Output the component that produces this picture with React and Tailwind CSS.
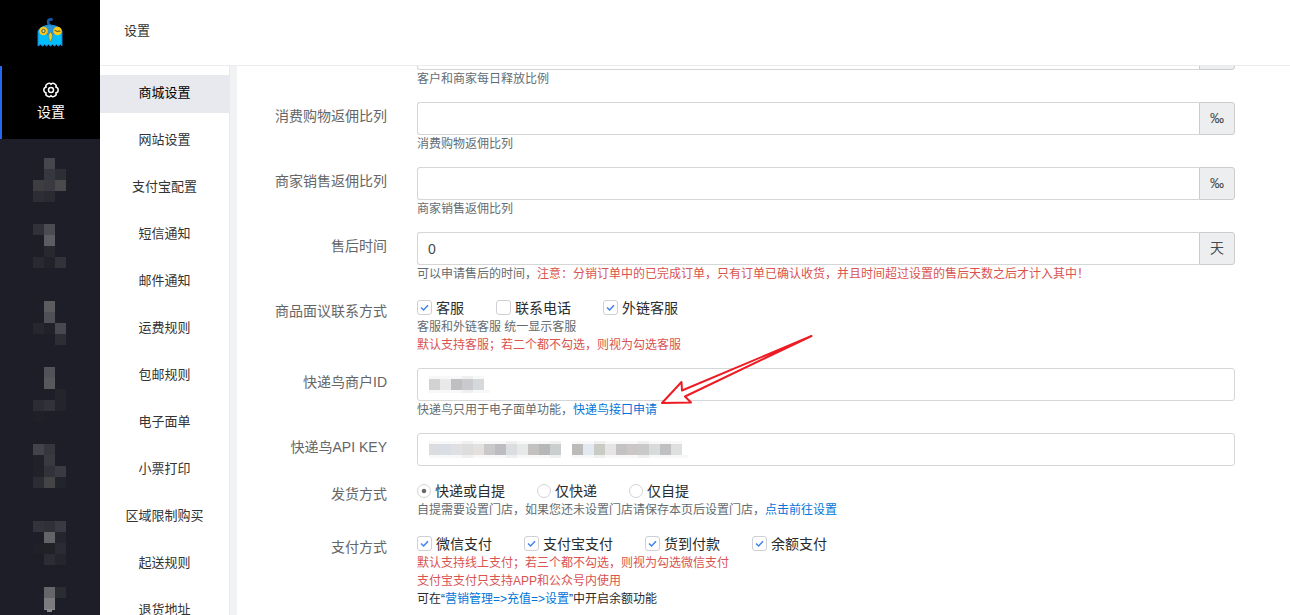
const MENU = [
  '商城设置', '网站设置', '支付宝配置', '短信通知', '邮件通知', '运费规则',
  '包邮规则', '电子面单', '小票打印', '区域限制购买', '起送规则', '退货地址',
]

// One entry per 11px row, three cells wide; null leaves the cell empty
const RAIL_MOSAIC = [
  [null, '#46464e', null],
  [null, '#373740', '#2e2e37'],
  ['#3e3e41', '#3a3a40', '#4a4a4d'],
  ['#2d2d36', '#2a2a32', null],
  [], [],
  ['#31313a', '#4b4b54', null],
  [null, '#5c5c64', null],
  [null, '#282830', null],
  ['#292932', '#22222b', '#32323b'],
  [], [], [],
  [null, '#5c5c60', null],
  [null, '#505058', null],
  ['#272730', '#21212a', '#484851'],
  [null, null, '#2d2d36'],
  [], [],
  [null, '#52525a', null],
  [null, '#58585c', null],
  [null, null, '#24242d'],
  ['#2c2c35', '#32323b', '#24242d'],
  ['#202029', null, null],
  [], [],
  ['#43434c', '#36363f', null],
  ['#21212a', '#393942', null],
  ['#21212a', '#32323b', '#3a3a43'],
  ['#2c2c35', '#444447', '#23232c'],
  [], [], [],
  ['#33333c', '#303039', '#3a3a43'],
  [null, '#646468', '#25252e'],
  ['#202028', '#212128', '#2b2b34'],
  [null, '#2c2c35', '#25252e'],
  [], [],
  [null, '#66666a', '#2b2b32'],
  [null, '#7b7b80', null],
]

const ID_MOSAIC = ['#d2d2d2', '#e8eaea', '#bfbfc1', '#cac9ce', '#d5d9dc']
const KEY_MOSAIC = [
  '#dadce0', '#d8dee3', '#e0e0e2', '#dddddd', '#e4e0de', '#c9c8ca', '#bdbdc1', '#dadee1',
  '#e6e9e8', '#c3c1bf', '#b6b8b7', '#c9cfcf', null, '#bbbbb7', '#e2e9f0', '#cacbc4',
  '#e5e5e5', '#c4c2c3', '#ccc7c6', '#cac9ca', '#d7dbda', '#c0c0c2', '#dee0df',
]

function Logo() {
  return (
    <svg width="28" height="32" viewBox="0 0 28 32" aria-hidden="true">
      <path d="M14 9C11 6 11.500 2 15.500 2.500" fill="none" stroke="#1257a8" strokeWidth="2.800" strokeLinecap="round" />
      <path d="M2 14Q5 8.500 14 8Q23 8.500 26 14V29L24.500 27.500L22.500 29L20.500 27.500L18.500 29L16.500 27.500L14.500 29L12.500 27.500L10.500 29L8.500 27.500L6.500 29L4.500 27.500L2 29Z" fill="#00bdfb" stroke="#1a7fd0" />
      <path d="M3 14Q8 8 14 8.500Q20 8 25 14L14 20Z" fill="#2b94d6" />
      <circle cx="7.500" cy="14" r="4.300" fill="#fbc918" />
      <circle cx="21.500" cy="14" r="4.300" fill="#fbc918" />
      <circle cx="7.500" cy="14" r="1.700" fill="#cfe0c0" stroke="#5a5228" />
      <path d="M18.500 13.200Q20.500 15.200 24.500 14" fill="none" stroke="#5a5228" />
      <path d="M14.500 15.500C17 16.500 17 20.500 14.500 25C12 20.500 12 16.500 14.500 15.500Z" fill="#fbc918" stroke="#3f7f90" strokeWidth="0.600" />
    </svg>
  )
}

function GearIcon() {
  return (
    <svg width="16" height="16" viewBox="0 0 16 16" fill="none" stroke="#fff" strokeWidth="1.500" strokeLinejoin="round" aria-hidden="true">
      <path d="M8 2.400C9.550 -.3 14.400 2.500 12.850 5.200C15.950 5.200 15.950 10.800 12.850 10.800C14.400 13.500 9.550 16.300 8 13.600C6.450 16.300 1.600 13.500 3.150 10.800C.05 10.800 .05 5.200 3.150 5.200C1.600 2.500 6.450 -.3 8 2.400Z" />
      <circle cx="8" cy="8" r="2.500" />
    </svg>
  )
}

function RailMosaic() {
  return (
    <svg className="mt-[19px] ml-[33px] block" width="33" height="456" aria-hidden="true">
      {RAIL_MOSAIC.map((row, y) =>
        row.map((c, x) => c && <rect key={`${x}-${y}`} x={x * 11} y={y * 11} width="11" height="11" fill={c} />),
      )}
      <path d="M11 451H22V452H19V454H14V452H11Z" fill="#8a8a8f" />
    </svg>
  )
}

function FieldMosaic({ cells }) {
  return (
    <svg className="absolute top-[7px] left-3" width={cells.length * 11 + 6} height="18" aria-hidden="true">
      {cells.map((c, i) => c && (
        <g key={i}>
          <rect x={i * 11} y="1" width="11" height="17" fill={i % 4 === 3 ? '#efefef' : '#f8f8f8'} />
          <rect x={i * 11} y="4" width="11" height="11" fill={c} />
        </g>
      ))}
      <rect x={cells.length * 11} y="15" width="6" height="3" fill="#f8f8f8" />
    </svg>
  )
}

function Row({ label, htmlFor, children }) {
  const Tag = htmlFor ? 'label' : 'span'
  return (
    <div className="flex gap-[30px]">
      <Tag htmlFor={htmlFor} className="w-[150px] shrink-0 pt-1 text-right text-sm text-[#666]">{label}</Tag>
      <div className="relative min-w-0 flex-1 text-xs leading-[18px] text-[#636c72]">{children}</div>
    </div>
  )
}

function TextField({ id, value, unit, mosaic, ...rest }) {
  return (
    <div className="relative flex h-[33px]">
      <input
        id={id}
        type="text"
        defaultValue={value}
        className={`min-w-0 flex-1 border border-[#d5d6d8] bg-white px-2.5 text-sm text-[#464a4c] outline-none ${unit ? 'rounded-l-[3px] border-r-0' : 'rounded-[3px]'}`}
        {...rest}
      />
      {unit && (
        <span className="flex w-9 items-center justify-center rounded-r-[3px] border border-[#cbcccd] bg-[#eceeef] pb-0.5 text-sm text-[#464a4c]">
          {unit}
        </span>
      )}
      {mosaic && <FieldMosaic cells={mosaic} />}
    </div>
  )
}

function Checks({ items }) {
  return (
    <div className="flex h-[21px] items-center gap-8 text-sm text-[#292b2c]">
      {items.map(([label, on]) => (
        <label key={label} className="flex items-center gap-1">
          <span className="relative flex">
            <input
              type="checkbox"
              defaultChecked={on}
              className="peer size-[15px] appearance-none rounded-[3px] border border-[#cfd0d4] bg-white"
            />
            <svg className="absolute inset-0 hidden peer-checked:block" width="15" height="15" viewBox="0 0 15 15" aria-hidden="true">
              <path d="M4 7.500L6.600 10L11 5.200" fill="none" stroke="#3f83f0" strokeWidth="1.500" />
            </svg>
          </span>
          {label}
        </label>
      ))}
    </div>
  )
}

function Radios({ name, items }) {
  return (
    <div className="flex h-[21px] items-center gap-8 text-sm text-[#292b2c]">
      {items.map((label, i) => (
        <label key={label} className="flex items-center gap-1">
          <span className="relative flex">
            <input
              type="radio"
              name={name}
              defaultChecked={i === 0}
              className="peer size-3.5 appearance-none rounded-full border border-[#d2d3d6] bg-white"
            />
            <svg className="absolute inset-0 hidden peer-checked:block" width="14" height="14" aria-hidden="true">
              <circle cx="7" cy="7" r="2.300" fill="#6a6a6a" />
            </svg>
          </span>
          {label}
        </label>
      ))}
    </div>
  )
}

function Arrow() {
  return (
    <svg className="absolute -top-9 left-[240px]" width="160" height="76" viewBox="657 332 160 76" aria-hidden="true">
      <path
        d="M811.500 336L682 390.500L681.500 382L662 403L691 402.500L685 396.500Z"
        fill="#fff"
        stroke="#ed1c24"
        strokeWidth="2"
        strokeLinejoin="round"
      />
    </svg>
  )
}

export default function App() {
  return (
    <div className="flex h-screen overflow-hidden bg-white font-['Liberation_Sans','Noto_Sans_CJK_SC',sans-serif]" lang="zh-CN">
      <aside className="w-[100px] shrink-0 overflow-hidden bg-[#1e1e28]">
        <div className="flex h-[66px] items-center justify-center bg-black">
          <Logo />
        </div>
        <a href="#settings" className="flex h-[73px] flex-col items-center border-l-2 border-[#2468f2] bg-black pt-4 text-sm text-white">
          <GearIcon />
          <span className="mt-1">设置</span>
        </a>
        <RailMosaic />
      </aside>

      <div className="flex min-w-0 flex-1 flex-col">
        <header className="flex h-[66px] shrink-0 items-center border-b border-[#ececee] px-6 pb-1">
          <h1 className="text-[13px] text-[#333]">设置</h1>
        </header>

        <div className="flex min-h-0 flex-1">
          <nav className="flex w-[130px] shrink-0 flex-col gap-[9px] overflow-hidden border-r border-[#e9eaed] pt-[9px]">
            {MENU.map((item, i) => (
              <a
                key={item}
                href="#menu"
                className={`flex h-[38px] shrink-0 items-center justify-center pb-0.5 text-[13px] ${i === 0 ? 'bg-[#e8e9ee] text-black' : 'text-[#333]'}`}
              >
                {item}
              </a>
            ))}
          </nav>
          <div className="w-[7px] shrink-0 bg-[#f1f2f4]" />

          <main className="min-w-0 flex-1 overflow-hidden pr-[55px]">
            <form className="-mt-[29px] flex flex-col gap-3.5">
              <Row>
                <TextField unit=" " aria-label="客户和商家每日释放比例" />
                <p>客户和商家每日释放比例</p>
              </Row>
              <Row label="消费购物返佣比列" htmlFor="buy-rate">
                <TextField id="buy-rate" unit="‰" />
                <p>消费购物返佣比列</p>
              </Row>
              <Row label="商家销售返佣比列" htmlFor="sale-rate">
                <TextField id="sale-rate" unit="‰" />
                <p>商家销售返佣比列</p>
              </Row>
              <Row label="售后时间" htmlFor="after-sale">
                <TextField id="after-sale" value="0" unit="天" />
                <p>
                  可以申请售后的时间，
                  <span className="text-[#d9534f]">注意：分销订单中的已完成订单，只有订单已确认收货，并且时间超过设置的售后天数之后才计入其中！</span>
                </p>
              </Row>
              <Row label="商品面议联系方式">
                <Checks items={[['客服', true], ['联系电话', false], ['外链客服', true]]} />
                <p>客服和外链客服 统一显示客服</p>
                <p className="text-[#d9534f]">默认支持客服；若二个都不勾选，则视为勾选客服</p>
              </Row>
              <Row label="快递鸟商户ID" htmlFor="bird-id">
                <TextField id="bird-id" mosaic={ID_MOSAIC} />
                <p>
                  快递鸟只用于电子面单功能，
                  <a href="#apply" className="text-[#0275d8]">快递鸟接口申请</a>
                </p>
                <Arrow />
              </Row>
              <Row label="快递鸟API KEY" htmlFor="bird-key">
                <TextField id="bird-key" mosaic={KEY_MOSAIC} />
              </Row>
              <Row label="发货方式">
                <Radios name="delivery" items={['快递或自提', '仅快递', '仅自提']} />
                <p>
                  自提需要设置门店，如果您还未设置门店请保存本页后设置门店，
                  <a href="#store" className="text-[#0275d8]">点击前往设置</a>
                </p>
              </Row>
              <Row label="支付方式">
                <Checks items={[['微信支付', true], ['支付宝支付', true], ['货到付款', true], ['余额支付', true]]} />
                <p className="text-[#d9534f]">默认支持线上支付；若三个都不勾选，则视为勾选微信支付</p>
                <p className="text-[#d9534f]">支付宝支付只支持APP和公众号内使用</p>
                <p className="text-[#292b2c]">
                  可在“<a href="#recharge" className="text-[#0275d8]">营销管理=&gt;充值=&gt;设置</a>”中开启余额功能
                </p>
              </Row>
            </form>
          </main>
        </div>
      </div>
    </div>
  )
}
